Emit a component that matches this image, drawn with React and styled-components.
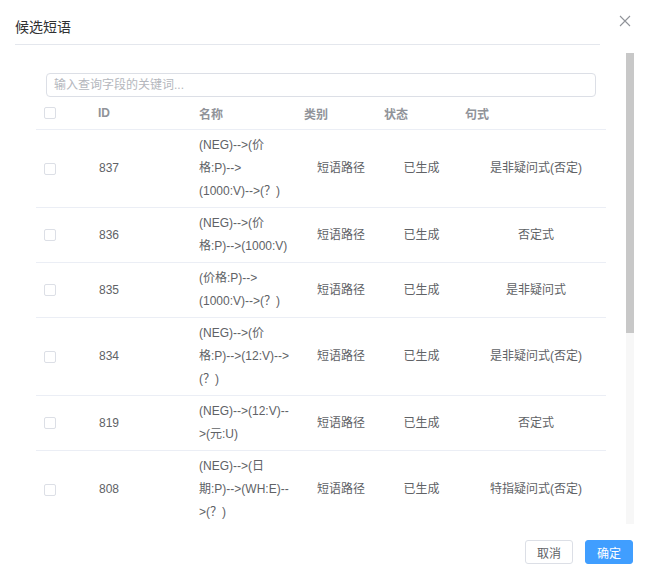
import React from "react";
import styled, { createGlobalStyle } from "styled-components";

const GlobalStyle = createGlobalStyle`
  html, body {
    margin: 0;
    padding: 0;
    background: #ffffff;
  }
  body {
    font-family: "Liberation Sans", "Noto Sans CJK SC", sans-serif;
    -webkit-font-smoothing: antialiased;
  }
  * { box-sizing: border-box; }
`;

const Dialog = styled.div`
  position: relative;
  width: 649px;
  height: 581px;
  background: #fff;
  display: flex;
  flex-direction: column;
  overflow: hidden;
`;

const HeaderBar = styled.div`
  margin-left: 15px;
  width: 585px;
  height: 45px;
  padding-top: 9px;
  display: flex;
  align-items: center;
  border-bottom: 1px solid #e4e7ed;
`;

const Title = styled.span`
  font-size: 14px;
  color: #303133;
  line-height: 20px;
`;

const CloseButton = styled.button`
  position: absolute;
  top: 15px;
  right: 18px;
  width: 12px;
  height: 12px;
  padding: 0;
  border: none;
  background: transparent;
  cursor: pointer;
  display: flex;
  align-items: center;
  justify-content: center;
`;

const Body = styled.div`
  margin: 8px 0 0 16px;
  width: 618px;
  height: 471px;
  display: flex;
`;

const ScrollArea = styled.div`
  flex: 1;
  height: 100%;
  overflow-y: auto;
  scrollbar-width: none;
  &::-webkit-scrollbar {
    display: none;
  }
`;

const ScrollTrack = styled.div`
  width: 8px;
  height: 100%;
  background: #f7f7f7;
  display: flex;
  flex-direction: column;
`;

const ScrollThumb = styled.div`
  width: 100%;
  background: #c8c8c8;
`;

const Content = styled.div`
  padding: 20px 20px 20px 20px;
`;

const SearchWrap = styled.div`
  padding: 0 10px;
`;

const SearchInput = styled.input`
  display: block;
  width: 100%;
  height: 24px;
  border: 1px solid #dcdfe6;
  border-radius: 4px;
  padding: 0 7px;
  font-family: "Liberation Sans", "Noto Sans CJK SC", sans-serif;
  font-size: 12px;
  color: #606266;
  outline: none;
  &::placeholder {
    color: #b4b7bd;
  }
`;

const gridCols = "59px 101px 105px 80px 81px 1fr";

const HeadRow = styled.div`
  display: grid;
  grid-template-columns: ${gridCols};
  height: 33px;
  align-items: center;
  border-bottom: 1px solid #ebeef5;
  font-size: 12px;
  color: #909399;
  font-weight: 700;
`;

const HeadCell = styled.div`
  padding-left: ${(p) => p.$pad ?? 3}px;
  white-space: nowrap;
`;

const Row = styled.div`
  display: grid;
  grid-template-columns: ${gridCols};
  align-items: center;
  padding: 4px 0;
  border-bottom: 1px solid #ebeef5;
  font-size: 12px;
  line-height: 23px;
  color: #606266;
`;

const Cell = styled.div`
  text-align: ${(p) => p.$align || "left"};
  padding-left: ${(p) => p.$pl ?? 0}px;
  padding-right: ${(p) => p.$pr ?? 0}px;
`;

const CheckBox = styled.span`
  display: block;
  margin-left: 8px;
  width: 12px;
  height: 12px;
  border: 1px solid #dcdfe6;
  border-radius: 2px;
  background: #fff;
`;

const Footer = styled.div`
  flex: 1;
  display: flex;
  justify-content: flex-end;
  align-items: flex-start;
  gap: 12px;
  padding: 16px 16px 0 0;
`;

const Button = styled.button`
  width: 48px;
  height: 24px;
  padding: 0;
  border-radius: 3px;
  font-family: "Liberation Sans", "Noto Sans CJK SC", sans-serif;
  font-size: 12px;
  cursor: pointer;
  border: 1px solid ${(p) => (p.$primary ? "#409eff" : "#dcdfe6")};
  background: ${(p) => (p.$primary ? "#409eff" : "#fff")};
  color: ${(p) => (p.$primary ? "#fff" : "#606266")};
`;

const rows = [
  { id: 837, name: "(NEG)-->(价格:P)-->(1000:V)-->(？)", type: "短语路径", status: "已生成", form: "是非疑问式(否定)" },
  { id: 836, name: "(NEG)-->(价格:P)-->(1000:V)", type: "短语路径", status: "已生成", form: "否定式" },
  { id: 835, name: "(价格:P)-->(1000:V)-->(？)", type: "短语路径", status: "已生成", form: "是非疑问式" },
  { id: 834, name: "(NEG)-->(价格:P)-->(12:V)-->(？)", type: "短语路径", status: "已生成", form: "是非疑问式(否定)" },
  { id: 819, name: "(NEG)-->(12:V)-->(元:U)", type: "短语路径", status: "已生成", form: "否定式" },
  { id: 808, name: "(NEG)-->(日期:P)-->(WH:E)-->(？)", type: "短语路径", status: "已生成", form: "特指疑问式(否定)" },
  { id: 807, name: "(日期:P)-->(WH:E)-->(？)", type: "短语路径", status: "已生成", form: "特指疑问式" },
  { id: 806, name: "(NEG)-->(日期:P)-->(WH:E)", type: "短语路径", status: "已生成", form: "否定式" },
  { id: 805, name: "(价格:P)-->(WH:E)-->(？)", type: "短语路径", status: "已生成", form: "特指疑问式" },
  { id: 804, name: "(NEG)-->(数量:P)-->(WH:E)-->(？)", type: "短语路径", status: "已生成", form: "特指疑问式(否定)" },
  { id: 803, name: "(数量:P)-->(WH:E)", type: "短语路径", status: "已生成", form: "特指疑问式" },
];

export default function App() {
  return (
    <>
      <GlobalStyle />
      <Dialog>
        <HeaderBar>
          <Title>候选短语</Title>
        </HeaderBar>
        <CloseButton aria-label="关闭">
          <svg width="12" height="12" viewBox="0 0 12 12">
            <path d="M1 1 L11 11 M11 1 L1 11" stroke="#909399" strokeWidth="1.1" fill="none" />
          </svg>
        </CloseButton>
        <Body>
          <ScrollArea>
            <Content>
              <SearchWrap>
                <SearchInput placeholder="输入查询字段的关键词..." />
              </SearchWrap>
              <HeadRow>
                <HeadCell $pad={0}>
                  <CheckBox />
                </HeadCell>
                <HeadCell>ID</HeadCell>
                <HeadCell>名称</HeadCell>
                <HeadCell>类别</HeadCell>
                <HeadCell>状态</HeadCell>
                <HeadCell>句式</HeadCell>
              </HeadRow>
              {rows.map((r) => (
                <Row key={r.id}>
                  <Cell>
                    <CheckBox />
                  </Cell>
                  <Cell $pl={4}>{r.id}</Cell>
                  <Cell $pl={3} $pr={10}>{r.name}</Cell>
                  <Cell $align="center">{r.type}</Cell>
                  <Cell $align="center">{r.status}</Cell>
                  <Cell $align="center" $pl={4}>{r.form}</Cell>
                </Row>
              ))}
            </Content>
          </ScrollArea>
          <ScrollTrack>
            <ScrollThumb style={{ height: 280 }} />
          </ScrollTrack>
        </Body>
        <Footer>
          <Button>取消</Button>
          <Button $primary>确定</Button>
        </Footer>
      </Dialog>
    </>
  );
}
